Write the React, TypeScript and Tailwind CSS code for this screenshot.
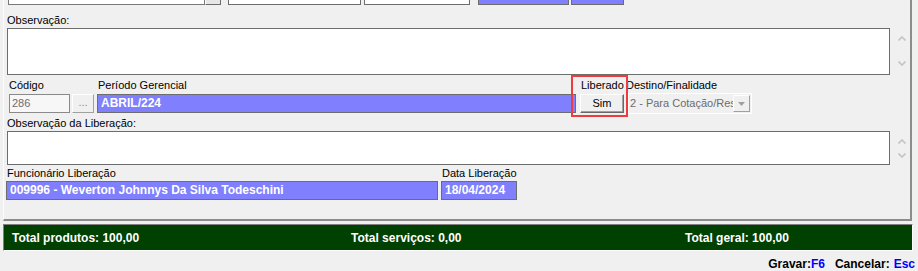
import React from 'react';

function ScrollArrows({ gap }: { gap: string }) {
  return (
    <div className={`flex flex-col items-center ml-[8px] pt-[8px] ${gap}`}>
      <svg width="8" height="5" viewBox="0 0 8 5">
        <polyline points="0.5,4.5 4,1 7.5,4.5" fill="none" stroke="#c4c4c4" strokeWidth="1.6" />
      </svg>
      <svg width="8" height="5" viewBox="0 0 8 5">
        <polyline points="0.5,0.5 4,4 7.5,0.5" fill="none" stroke="#c4c4c4" strokeWidth="1.6" />
      </svg>
    </div>
  );
}

function Label({ children, className = '' }: { children: React.ReactNode; className?: string }) {
  return <div className={`h-[13px] leading-[13px] text-[11px] text-black whitespace-nowrap ${className}`}>{children}</div>;
}

function BlueField({ text, className = '' }: { text: string; className?: string }) {
  return (
    <div className={`h-[19px] bg-[#8080ff] border border-[#6d6d6d] pl-[3px] text-white font-bold text-[12px] leading-[17px] whitespace-nowrap overflow-hidden ${className}`}>
      {text}
    </div>
  );
}

export default function App() {
  return (
    <div className="w-[918px] h-[271px] bg-[#f0f0f0] font-['Liberation_Sans',Arial,sans-serif] overflow-hidden">
      {/* main panel */}
      <div className="ml-[3px] w-[909px] h-[221px] border-l border-l-[#fcfcfc] border-r-2 border-b-2 border-r-[#8c8c8c] border-b-[#8c8c8c] flex flex-col">
        {/* top row, mostly scrolled off */}
        <div className="h-[5px] overflow-hidden flex items-end pl-[4px]">
          <div className="w-[197px] h-[20px] bg-white border border-[#7a7a7a] shrink-0" />
          <div className="w-[16px] h-[20px] bg-[#e6e6e6] border border-t-white border-l-white border-r-[#6d6d6d] border-b-[#6d6d6d] shrink-0" />
          <div className="ml-[7px] w-[133px] h-[20px] bg-white border border-[#6d6d6d] shrink-0" />
          <div className="ml-[3px] w-[106px] h-[20px] bg-white border border-[#6d6d6d] shrink-0" />
          <div className="ml-[8px] w-[91px] h-[20px] bg-[#8080ff] border border-[#6d6d6d] shrink-0" />
          <div className="ml-[2px] w-[53px] h-[20px] bg-[#8080ff] border border-[#6d6d6d] shrink-0" />
        </div>

        {/* Observação */}
        <Label className="mt-[9px] ml-[3px]">Observação:</Label>
        <div className="flex mt-[1px]">
          <div className="ml-[3px] w-[883px] h-[47px] bg-white border border-[#6d6d6d]" />
          <ScrollArrows gap="gap-[20px]" />
        </div>

        {/* Código / Período / Liberado / Destino */}
        <div className="relative flex mt-[4px] h-[38px]">
          <div className="flex flex-col ml-[5px]">
            <Label>Código</Label>
            <div className="flex mt-[2px]">
              <div className="w-[61px] h-[19px] bg-[#f7f7f7] border border-[#8a8a8a] pl-[2px] text-[11px] leading-[17px] text-[#6d6d6d]">286</div>
              <div className="ml-[2px] w-[22px] h-[19px] bg-[#f0f0f0] border border-t-white border-l-white border-r-[#a0a0a0] border-b-[#a0a0a0] text-center text-[11px] leading-[15px] text-[#8a8a8a]">...</div>
            </div>
          </div>
          <div className="flex flex-col ml-[3px]">
            <Label className="ml-[1px]">Período Gerencial</Label>
            <BlueField text="ABRIL/224" className="mt-[2px] w-[479px]" />
          </div>
          <div className="flex flex-col ml-[4px]">
            <Label className="ml-[1px]">Liberado</Label>
            <div className="mt-[2px] w-[44px] h-[19px] bg-[#f0f0f0] border border-t-white border-l-white border-r-[#696969] border-b-[#696969] shadow-[inset_-1px_-1px_0_#a0a0a0] text-center text-[11px] leading-[16px] text-black">
              Sim
            </div>
          </div>
          <div className="flex flex-col ml-[2px]">
            <Label>Destino/Finalidade</Label>
            <div className="mt-[1px] ml-[2px] w-[124px] h-[21px] bg-[#f0f0f0] border border-white flex items-center">
              <div className="flex-1 pl-[1px] text-[11px] leading-[17px] text-[#6d6d6d] whitespace-nowrap overflow-hidden">2 - Para Cotação/Res</div>
              <div className="w-[17px] h-[17px] mr-[1px] bg-[#f0f0f0] border border-t-white border-l-white border-r-[#a0a0a0] border-b-[#a0a0a0] flex items-center justify-center">
                <svg width="7" height="4" viewBox="0 0 7 4">
                  <polygon points="0,0 7,0 3.5,4" fill="#a0a0a0" />
                </svg>
              </div>
            </div>
          </div>
          {/* highlight */}
          <div className="absolute left-[567px] top-[-4px] w-[57px] h-[42px] border-2 border-[#ee3b3b]" />
        </div>

        {/* Observação da Liberação */}
        <Label className="ml-[3px]">Observação da Liberação:</Label>
        <div className="flex mt-[1px]">
          <div className="ml-[3px] w-[883px] h-[34px] bg-white border border-[#6d6d6d]" />
          <ScrollArrows gap="gap-[9px]" />
        </div>

        {/* Funcionário / Data */}
        <div className="flex mt-[2px]">
          <div className="flex flex-col ml-[2px]">
            <Label className="ml-[1px]">Funcionário Liberação</Label>
            <BlueField text="009996 - Weverton Johnnys Da Silva Todeschini" className="mt-[1px] w-[432px]" />
          </div>
          <div className="flex flex-col ml-[3px]">
            <Label className="ml-[1px]">Data Liberação</Label>
            <BlueField text="18/04/2024" className="mt-[1px] w-[76px]" />
          </div>
        </div>
      </div>

      {/* totals bar */}
      <div className="ml-[3px] mt-[3px] w-[910px] h-[27px] bg-[#004000] border border-t-[#808080] border-l-[#808080] border-r-white border-b-white flex items-center text-white font-bold text-[12px] leading-[14px] whitespace-nowrap">
        <div className="w-[347px] pl-[8px]">Total produtos: 100,00</div>
        <div className="w-[334px]">Total serviços: 0,00</div>
        <div>Total geral: 100,00</div>
      </div>

      {/* shortcuts */}
      <div className="flex justify-end pr-[3px] mt-[6px] text-[12px] leading-[14px] font-bold text-black whitespace-nowrap">
        <span>Gravar:</span>
        <span className="text-[#0000ff]">F6</span>
        <span className="ml-[10px]">Cancelar:</span>
        <span className="ml-[4px] text-[#0000ff]">Esc</span>
      </div>
    </div>
  );
}
